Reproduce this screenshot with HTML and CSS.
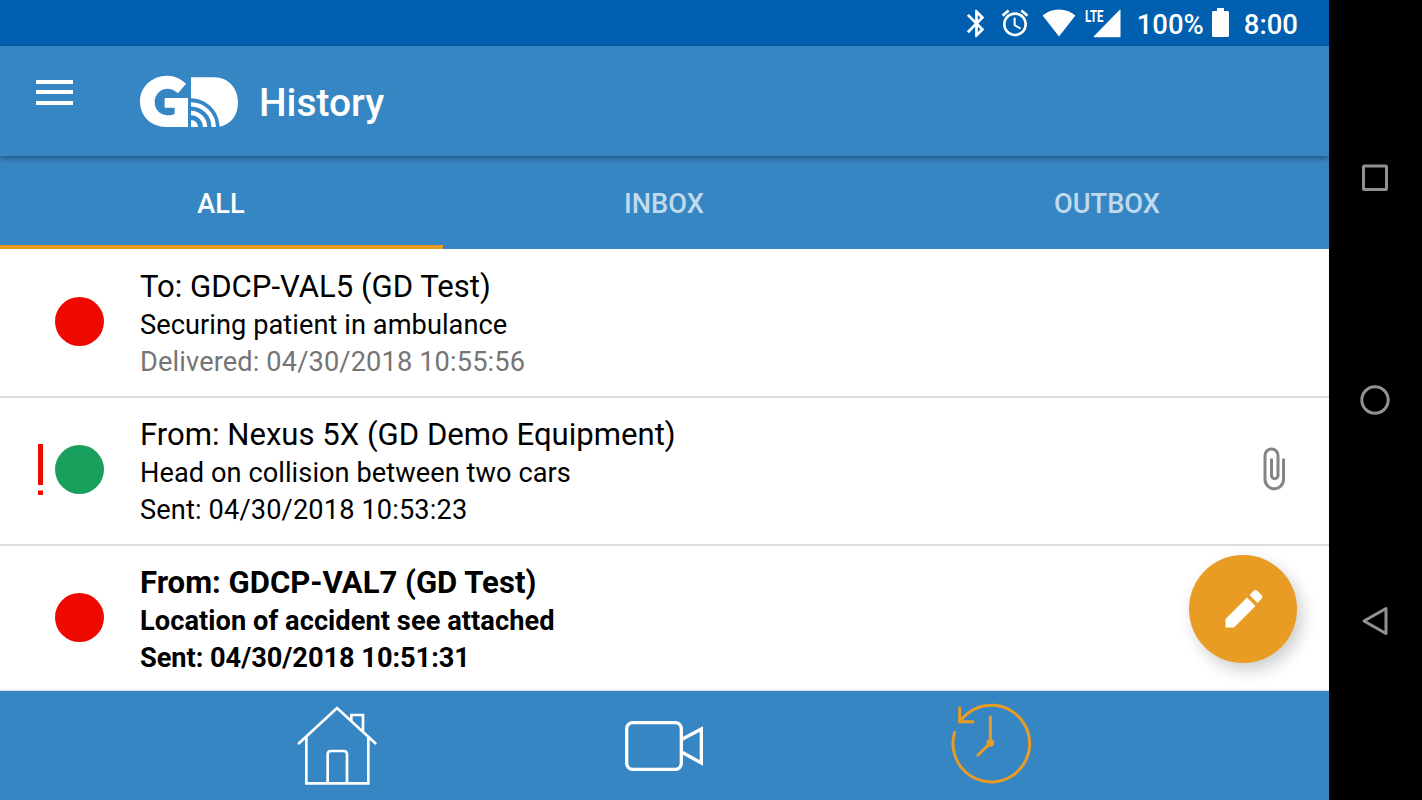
FILE: index.html
```html
<!doctype html>
<html lang="en">
  <head>
    <meta charset="UTF-8" />
    <meta name="viewport" content="width=device-width, initial-scale=1.0" />
    <title>History</title>
    <link rel="stylesheet" href="styles.css">
  </head>
  <body>
    <div class="app">
      <div class="status-bar">
        <svg class="icon-bluetooth" viewBox="0 0 24 24"><path d="M17.71 7.71L12 2h-1v7.59L6.41 5 5 6.41 10.59 12 5 17.59 6.41 19 11 14.41V22h1l5.71-5.71-4.3-4.29 4.3-4.29zM13 5.83l1.88 1.88L13 9.59V5.83zm1.88 10.46L13 18.17v-3.76l1.88 1.88z"/></svg>
        <svg class="icon-alarm" viewBox="0 0 24 24"><path d="M22 5.72l-4.6-3.86-1.29 1.53 4.6 3.86L22 5.72zM7.88 3.39L6.6 1.86 2 5.71l1.29 1.53 4.59-3.85zM12.5 8H11v6l4.75 2.85.75-1.23-4-2.37V8zM12 4c-4.97 0-9 4.03-9 9s4.02 9 9 9c4.97 0 9-4.03 9-9s-4.03-9-9-9zm0 16c-3.87 0-7-3.13-7-7s3.13-7 7-7 7 3.13 7 7-3.13 7-7 7z"/></svg>
        <svg class="icon-wifi" viewBox="0 0 34 28"><path d="M17 27.500L.6 6.500Q7.500.5 17 .5t16.400 6z"/></svg>
        <svg class="icon-signal" viewBox="-2 -6 38 42">
          <text x="0" y="13.500" textLength="18.500" lengthAdjust="spacingAndGlyphs">LTE</text>
          <path d="M35.500 2.500V28.500q0 .8-.8.8H9.500q-1.500 0-.6-1L34 2.500q1.500-1.500 1.500 0z"/>
        </svg>
        <span class="battery-level">100%</span>
        <svg class="icon-battery" viewBox="0 0 17 30"><path d="M5 0h7v3h3.500q1.500 0 1.500 1.500v23q0 1.500-1.500 1.500h-14Q0 29 0 27.500v-23Q0 3 1.500 3H5z"/></svg>
        <span class="clock">8:00</span>
      </div>

      <div class="toolbar">
        <div class="menu-button"><span></span><span></span><span></span></div>
        <svg class="logo" viewBox="355 40 300 165">
          <path d="M440 45C462 45 480 54 496 69L472 98C463 89 452 84 441 84C418 84 402 102 402 124C402 148 420 164 442 164C450 164 457 162 462 160V141H432V112H502V199H436C392 199 358 168 358 122C358 80 392 45 440 45z"/>
          <path d="M511 50H580C625 50 652 85 652 125C652 165 630 192 597 198C594 150 560 116 511 113z"/>
          <path class="logo-wave" d="M511 131A68 68 0 0 1 579 199M511 157A42 42 0 0 1 553 199"/>
          <path d="M511 178A21 21 0 0 1 532 199H511z"/>
        </svg>
        <h1>History</h1>
      </div>

      <div class="tabs">
        <div class="tab active">ALL</div>
        <div class="tab">INBOX</div>
        <div class="tab">OUTBOX</div>
      </div>

      <div class="messages">
        <div class="message">
          <div class="message-status">
            <span class="dot red"></span>
          </div>
          <div class="message-text">
            <div class="message-title">To: GDCP-VAL5 (GD Test)</div>
            <div class="message-body">Securing patient in ambulance</div>
            <div class="message-time delivered">Delivered: 04/30/2018 10:55:56</div>
          </div>
        </div>
        <div class="message">
          <div class="message-status">
            <svg class="priority" viewBox="0 0 5 51"><path d="M0 0h5v41H0zM0 46.500h5V51H0z"/></svg>
            <span class="dot green"></span>
          </div>
          <div class="message-text">
            <div class="message-title">From: Nexus 5X (GD Demo Equipment)</div>
            <div class="message-body">Head on collision between two cars</div>
            <div class="message-time">Sent: 04/30/2018 10:53:23</div>
          </div>
          <svg class="attachment" viewBox="0 0 24 44"><path d="M21.500 11.500V32.500a9.250 9.250 0 0 1-18.500 0V8.500a6.500 6.500 0 0 1 13 0V28.500a3.250 3.250 0 0 1-6.500 0V11.500"/></svg>
        </div>
        <div class="message unread">
          <div class="message-status">
            <span class="dot red"></span>
          </div>
          <div class="message-text">
            <div class="message-title">From: GDCP-VAL7 (GD Test)</div>
            <div class="message-body">Location of accident see attached</div>
            <div class="message-time">Sent: 04/30/2018 10:51:31</div>
          </div>
        </div>
        <div class="compose">
          <svg viewBox="0 0 108 108"><path d="M36.500 72.500V64L58 42.500l8.500 8.500L45 72.500zM60.500 40l4.200-4.200q1.800-1.800 3.600 0l4.300 4.300q1.800 1.800 0 3.600L68.500 48z"/></svg>
        </div>
      </div>

      <div class="bottom-nav">
        <div class="nav-item">
          <svg viewBox="-7 3 360 327">
            <path d="M56 160L170 54L285 160M78 142V280H264V142M142 280V193Q142 183 152 183H190Q200 183 200 193V280M213 94V75H248V124"/>
          </svg>
        </div>
        <div class="nav-item">
          <svg class="video" viewBox="-15 -27 360 327">
            <rect x="50" y="68" width="164" height="140" rx="18"/>
            <path d="M216 118L274 87V189L216 157"/>
          </svg>
        </div>
        <div class="nav-item selected">
          <svg viewBox="6 4 360 327">
            <path d="M74 128A115 115 0 1 0 94 90M89 54V96H129M181 81V160L144 196"/>
            <circle cx="181" cy="160" r="7"/>
          </svg>
        </div>
      </div>
    </div>

    <div class="system-nav">
      <svg viewBox="0 0 30 30"><rect x="3.500" y="3" width="23" height="23.500" rx="1"/></svg>
      <svg viewBox="0 0 30 30"><circle cx="15" cy="15" r="13.200"/></svg>
      <svg viewBox="0 0 30 30"><path d="M26 2.500V27.500L4 15z"/></svg>
    </div>
  </body>
</html>
```

FILE: styles.css
```css
body {
  display: flex;
  margin: 0;
  background: #000;
  width: 1422px;
  height: 800px;
  overflow: hidden;
  font-family: Roboto, 'Liberation Sans', sans-serif;
}

.app {
  display: flex;
  flex-direction: column;
  width: 1329px;
  background: #fff;
}

.status-bar {
  display: flex;
  align-items: center;
  justify-content: flex-end;
  box-sizing: border-box;
  background: #0060af;
  padding-right: 31px;
  height: 46px;
  color: #fff;
  font-weight: 500;
  font-size: 27.5px;
}

.status-bar svg {
  fill: #fff;
}

.icon-bluetooth {
  margin-right: 6px;
  width: 33px;
  height: 33px;
}

.icon-alarm {
  margin-right: 11px;
  width: 32px;
  height: 32px;
}

.icon-wifi {
  margin-right: 7px;
  width: 34px;
  height: 28px;
}

.icon-signal {
  margin-right: 16px;
  width: 38px;
  height: 42px;
}

.icon-signal text {
  font-weight: 700;
  font-size: 16.5px;
}

.icon-battery {
  margin: 0 15px 0 8px;
  width: 17px;
  height: 30px;
}

.battery-level,
.clock {
  padding-top: 3px;
}

.toolbar {
  display: flex;
  z-index: 1;
  box-shadow: 0 2px 6px rgba(0, 0, 0, 0.4);
  background: #3786c4;
  height: 110px;
}

.menu-button {
  display: flex;
  flex-direction: column;
  gap: 6.4px;
  margin: 34px 66px 0 36px;
  width: 37px;
}

.menu-button span {
  background: #fff;
  height: 4px;
}

.logo {
  margin-top: 27.5px;
  width: 100px;
  height: 55px;
  fill: #fff;
}

.logo-wave {
  fill: none;
  stroke: #fff;
  stroke-width: 13;
}

.toolbar h1 {
  margin: 34px 0 0 20px;
  color: #fff;
  font-weight: 500;
  font-size: 38.9px;
  line-height: 46px;
}

.tabs {
  display: grid;
  grid-template-columns: repeat(3, 1fr);
  background: #3786c4;
  height: 93px;
}

.tab {
  border-bottom: 4px solid transparent;
  padding-right: 1px;
  color: #c0daed;
  font-weight: 500;
  font-size: 27.2px;
  line-height: 96px;
  text-align: center;
  height: 89px;
}

.tab.active {
  border-color: #e89c23;
  color: #fff;
}

.messages {
  position: relative;
  box-sizing: border-box;
  border-bottom: 1px solid #dcdcdc;
  padding-top: 1px;
  height: 442px;
  overflow: hidden;
}

.message {
  display: flex;
  align-items: center;
  box-sizing: border-box;
  border-bottom: 2px solid #dcdcdc;
  height: 148px;
}

.message-status {
  display: flex;
  align-items: center;
  justify-content: flex-end;
  gap: 12px;
  margin: 0 36px 3px 0;
  width: 104px;
}

.dot {
  border-radius: 50%;
  width: 49px;
  height: 49px;
}

.dot.red {
  background: #ee0a00;
}

.dot.green {
  background: #1aa05d;
}

.priority {
  width: 5px;
  height: 51px;
  fill: #ee0a00;
}

.message-text {
  flex: 1;
  color: #000;
  font-size: 27.2px;
  line-height: 37px;
}

.message-title {
  font-size: 31.1px;
  line-height: 41px;
}

.message-body {
  letter-spacing: 0.06px;
}

.message-time {
  letter-spacing: 0.13px;
}

.message-time.delivered {
  color: #757575;
}

.unread {
  font-weight: 700;
}

.unread .message-time {
  letter-spacing: -0.04px;
}

.attachment {
  margin: 0 43px 4px 0;
  width: 24px;
  height: 44px;
  fill: none;
  stroke: #858585;
  stroke-width: 3;
}

/* floating button over the list */
.compose {
  position: absolute;
  right: 32px;
  bottom: 27px;
  border-radius: 50%;
  box-shadow: 5px 7px 16px rgba(0, 0, 0, 0.2);
  background: #e89c23;
  width: 108px;
  height: 108px;
}

.compose svg {
  display: block;
  fill: #fff;
}

.bottom-nav {
  display: flex;
  justify-content: center;
  background: #3786c4;
  height: 109px;
}

.nav-item {
  display: flex;
  justify-content: center;
  width: 327px;
}

.nav-item svg {
  width: 120px;
  height: 109px;
  fill: none;
  stroke: #fff;
  stroke-width: 8;
  stroke-linecap: round;
}

.nav-item .video {
  stroke-width: 10;
  stroke-linecap: butt;
}

.nav-item.selected svg {
  stroke: #e89c23;
  stroke-width: 9;
}

.nav-item.selected circle {
  fill: #e89c23;
}

.system-nav {
  display: flex;
  flex-direction: column;
  align-items: center;
  justify-content: space-between;
  box-sizing: border-box;
  padding: 163px 1px 164px 0;
  width: 93px;
}

.system-nav svg {
  width: 30px;
  height: 30px;
  fill: none;
  stroke: #929292;
  stroke-width: 3;
  stroke-linejoin: round;
}
```
